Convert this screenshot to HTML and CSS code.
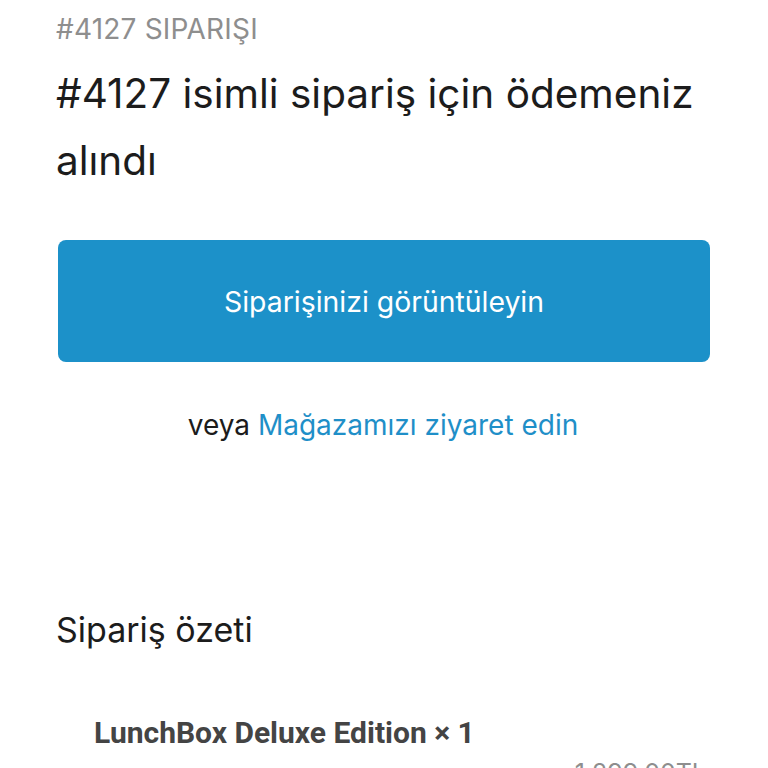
FILE: index.html
```html
<!DOCTYPE html>
<html lang="tr">
<head>
    <meta charset="UTF-8">
    <meta name="viewport" content="width=device-width, initial-scale=1.0">
    <title>Sipariş #4127</title>
    <link rel="stylesheet" href="styles.css">
</head>
<body>
    <div class="order-page">
        <div class="order-header">
            <p class="order-number">#4127 SIPARIŞI</p>
            <h1 class="order-title">#4127 isimli sipariş için ödemeniz alındı</h1>
        </div>

        <div class="order-actions">
            <a class="view-button" href="#">Siparişinizi görüntüleyin</a>
            <p class="store-link">veya <a href="#">Mağazamızı ziyaret edin</a></p>
        </div>

        <div class="order-summary">
            <h2>Sipariş özeti</h2>
            <div class="summary-item">
                <span class="item-name">LunchBox Deluxe Edition × 1</span>
                <span class="item-price">1.299,00TL</span>
            </div>
        </div>
    </div>
</body>
</html>
```

FILE: styles.css
```css
/* General Styles */
body, html {
    margin: 0;
    padding: 0;
    background-color: #ffffff;
    font-family: 'Inter', 'Roboto', sans-serif;
    color: #1c1c1c;
    overflow: hidden;
}

.order-page {
    padding: 12px 58px 0 56px;
}

.order-number {
    margin: 0;
    font-size: 28px;
    color: #8e8e8e;
    letter-spacing: 0.2px;
}

.order-title {
    margin: 14px 0 0;
    font-size: 40.5px;
    font-weight: 400;
    line-height: 67px;
    color: #1c1c1c;
}

.order-actions {
    margin-top: 46px;
    text-align: center;
}

.view-button {
    display: flex;
    justify-content: center;
    align-items: center;
    height: 122px;
    margin-left: 2px;
    border-radius: 8px;
    background-color: #1c91c9;
    color: #ffffff;
    font-size: 28.4px;
    text-decoration: none;
}

.store-link {
    margin: 46px 0 0;
    font-size: 28px;
    color: #1c1c1c;
}

.store-link a {
    color: #1f8fc8;
    text-decoration: none;
}

.order-summary {
    margin-top: 167px;
}

.order-summary h2 {
    margin: 0;
    font-size: 34px;
    font-weight: 400;
    color: #1c1c1c;
}

.summary-item {
    display: flex;
    flex-direction: column;
    padding: 65px 4px 0 38px;
}

.item-name {
    font-family: 'Roboto', sans-serif;
    font-weight: 700;
    font-size: 30px;
    color: #444444;
}

.item-price {
    align-self: flex-end;
    margin-top: 8px;
    font-size: 25px;
    color: #8e8e8e;
}
```
